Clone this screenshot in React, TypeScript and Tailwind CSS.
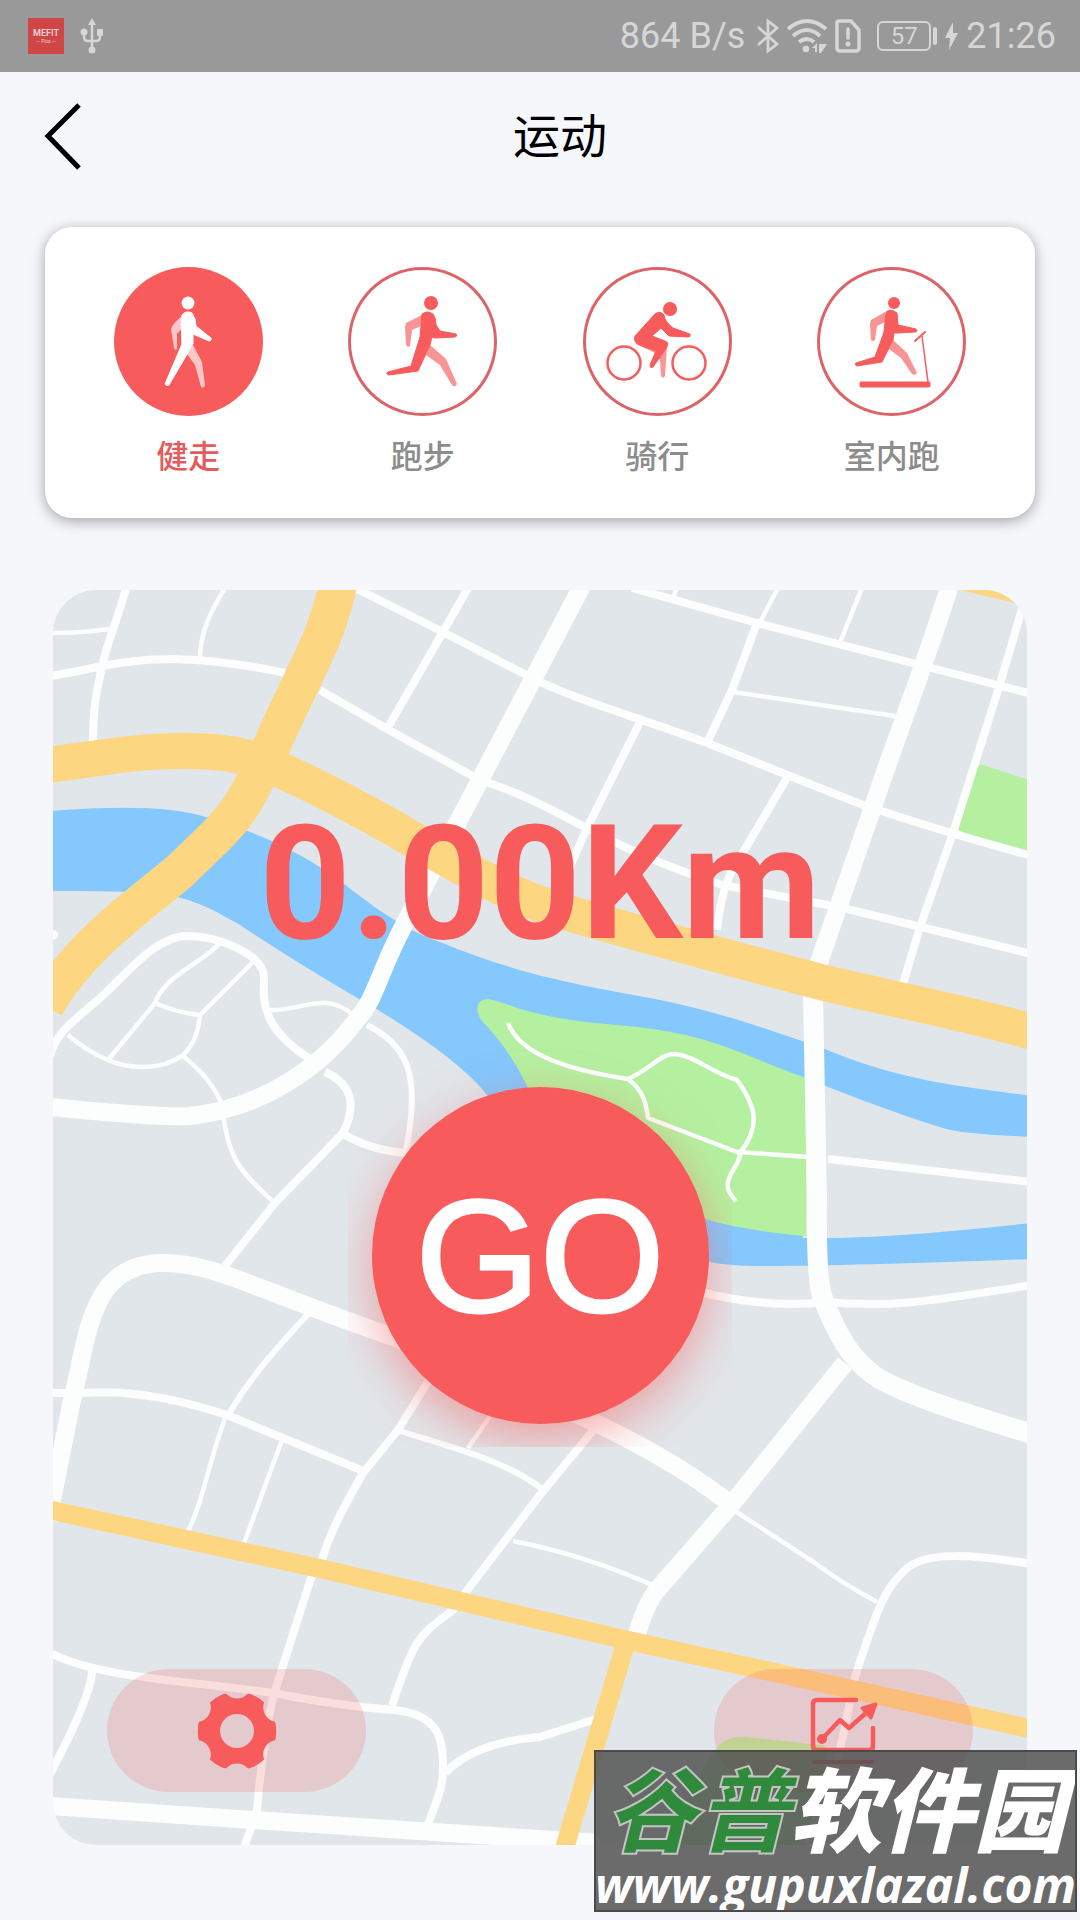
import React, { useState } from 'react';

type IconProps = { className?: string };

const WalkIcon = ({ className }: IconProps) => (
  <svg viewBox="0 0 149 149" className={className} fill="currentColor" stroke="currentColor" strokeLinejoin="round">
    <g opacity="0.65" stroke="none">
      <path d="M67 50C62 54 58 58 57 62L60 81Q61 84 63 82L63 67L68 61Z" />
      <path d="M79 78L88 95L91 118Q90 122 87 120L81 98L73 87Z" />
    </g>
    <circle cx="74" cy="36" r="6.5" stroke="none" />
    <path d="M68 48Q72 43 78 46L81 52L82 59L97 71Q98 74 95 74L79 67L79 77L55 118Q52 120 51 117L68 77L67 54Z" />
  </svg>
);

const RunIcon = ({ className }: IconProps) => (
  <svg viewBox="0 0 149 149" className={className} fill="currentColor" stroke="currentColor" strokeLinejoin="round">
    <g opacity="0.65" stroke="none">
      <path d="M74 48L58 56L57 60L58 78Q60 81 62 79L64 63L73 59Z" />
      <path d="M82 78L98 92L109 117Q107 121 104 118L92 98L78 88Z" />
    </g>
    <circle cx="83" cy="36" r="7" stroke="none" />
    <path d="M74 47Q79 43 85 47Q88 51 88 58L92 64L108 67Q110 69 107 70L87 71L84 70L82 78L70 104L41 108Q37 107 40 105L63 99L72 70Z" />
  </svg>
);

const BikeIcon = ({ className }: IconProps) => (
  <svg viewBox="0 0 149 149" className={className} fill="currentColor" stroke="currentColor" strokeLinejoin="round">
    <path opacity="0.65" stroke="none" d="M58 79L72 86L77 93L78 109Q80 112 82 109L84 80L70 74Z" />
    <g fill="none" strokeWidth="2.5">
      <circle cx="41" cy="96" r="16.5" />
      <circle cx="106" cy="96" r="16.5" />
    </g>
    <circle cx="87" cy="42" r="7" stroke="none" />
    <path d="M72 47Q77 43 81 48Q82 55 90 61L107 67Q108 70 105 70L86 69L78 61L69 69L82 74Q86 75 84 80L70 100Q67 102 67 98L73 84L56 78Q50 75 52 69Z" />
  </svg>
);

const TreadmillIcon = ({ className }: IconProps) => (
  <svg viewBox="0 0 149 149" className={className} fill="currentColor" stroke="currentColor" strokeLinejoin="round">
    <g opacity="0.65" stroke="none">
      <path d="M68 45L54 53L53 57L54 73Q56 75 58 73L60 59L68 55Z" />
      <path d="M76 73L90 86L100 106Q98 109 95 107L84 91L72 82Z" />
    </g>
    <circle cx="77" cy="36" r="6" stroke="none" />
    <path d="M69 45Q74 41 80 46L81 58L99 62Q101 65 98 65L81 66L77 66L76 73L65 95L40 99Q37 98 39 96L58 90L67 65Z" />
    <rect x="43" y="115" width="70" height="5" rx="1" />
    <path fill="none" strokeWidth="1.5" d="M105 69L111 115" />
    <path fill="none" strokeWidth="2" strokeLinecap="round" d="M98 74L108 65" />
  </svg>
);

const GearIcon = ({ className }: IconProps) => (
  <svg viewBox="-40 -40 80 80" className={className}>
    <mask id="gear-notches">
      <circle r="39.5" fill="#fff" />
      <circle r="17" fill="#000" />
      {[0, 60, 120, 180, 240, 300].map((angle) => (
        <circle key={angle} cy="-47" r="14.5" fill="#000" transform={`rotate(${angle})`} />
      ))}
    </mask>
    <circle r="39.5" fill="currentColor" mask="url(#gear-notches)" />
  </svg>
);

const ChartIcon = ({ className }: IconProps) => (
  <svg viewBox="0 0 68 68" className={className} fill="none" stroke="currentColor" strokeWidth="4.5" strokeLinecap="round" strokeLinejoin="round">
    <path d="M46 3H7Q3 3 3 7V49Q3 53 7 53H59Q63 53 63 49V31" />
    <path d="M4 65H62" strokeWidth="4" />
    <path d="M12 42L30 23L39 31L56 16" />
    <circle cx="12" cy="42" r="5" fill="currentColor" stroke="none" />
    <path d="M52 11L66 7L61 21Z" fill="currentColor" strokeWidth="3" />
  </svg>
);

const UsbIcon = () => (
  <svg viewBox="0 0 24 36" className="h-9 w-6" fill="currentColor">
    <path d="M12 0L16 7H8Z" />
    <circle cx="4" cy="14" r="3.5" />
    <rect x="17" y="11" width="6" height="7" rx="1" />
    <circle cx="12" cy="32" r="3.5" />
    <path d="M12 5V32M4 15V19Q4 23 8 23H16Q20 23 20 19V16" fill="none" stroke="currentColor" strokeWidth="2.5" />
  </svg>
);

const StatusBar = () => (
  <div className="flex h-[72px] items-center justify-between bg-[#999999] pl-7 pr-6 font-[Roboto,sans-serif] text-[#d6d6d6]">
    <div className="flex items-center gap-4">
      <div className="flex size-9 flex-col items-center justify-center bg-[#d04545] text-[#f1d0d0]">
        <span className="text-[9px] leading-[10px] font-bold">MEFIT</span>
        <span className="text-[5px] leading-[6px]">— Plus —</span>
      </div>
      <UsbIcon />
    </div>
    <div className="flex items-center">
      <span className="mr-3 text-4xl leading-10">864 B/s</span>
      <svg viewBox="0 0 22 36" className="mr-2 h-9 w-[22px]" fill="none" stroke="currentColor" strokeWidth="2.8">
        <path d="M1 9L20 26L11 33V3L20 10L1 27" />
      </svg>
      <svg viewBox="0 0 40 34" className="mr-2 h-[34px] w-10" fill="none" stroke="currentColor" strokeWidth="3.8">
        <path d="M1 10Q20 -6 39 10M6 17Q20 5 33 17M12 23Q20 17 27 23" />
        <circle cx="19" cy="30" r="3.3" fill="currentColor" stroke="none" />
        <path d="M25 29L30 24V33H28V29ZM32 25H40L34 34H32Z" fill="currentColor" stroke="none" />
      </svg>
      <svg viewBox="0 0 26 34" className="mr-4 h-[34px] w-[26px]" fill="none" stroke="currentColor" strokeWidth="3.5">
        <path d="M4 2H16L24 11V29Q24 32 21 32H5Q2 32 2 29V4Q2 2 4 2Z" />
        <path d="M13 10V19" strokeLinecap="round" />
        <circle cx="13" cy="25" r="2.5" fill="currentColor" stroke="none" />
      </svg>
      <span className="flex h-[30px] w-[54px] items-center justify-center rounded-md border-2 border-current text-2xl leading-6">
        57
      </span>
      <span className="mr-2 ml-0.5 h-[18px] w-1 rounded-sm bg-current" />
      <svg viewBox="0 0 13 28" className="mr-2 h-7 w-[13px]" fill="currentColor">
        <path d="M8 0L0 16H5L4 28L13 11H8Z" />
      </svg>
      <span className="text-4xl leading-10">21:26</span>
    </div>
  </div>
);

const modes = [
  { label: '健走', Icon: WalkIcon },
  { label: '跑步', Icon: RunIcon },
  { label: '骑行', Icon: BikeIcon },
  { label: '室内跑', Icon: TreadmillIcon },
];

// white streets, grouped by stroke width
const streets = [
  {
    width: 4.5,
    d: [
      'M50 633C75 633 95 631 109 629',
      'M225 588C212 610 201 628 200 657',
      'M677 588L671 602M778 588L760 622M862 588L839 645',
      'M733 692L895 716',
      'M220 943C200 965 165 975 155 1003L108 1060',
      'M253 962L200 1015C198 1035 193 1045 183 1055C160 1072 125 1068 108 1060Q88 1052 68 1035',
      'M155 1003Q178 1013 200 1015',
      'M183 1056Q213 1080 222 1105C227 1155 237 1170 275 1203',
      'M268 1010C300 1012 325 990 353 1015',
      'M508 1023C518 1050 555 1068 628 1079C645 1092 646 1105 648 1118L737 1152L810 1157',
      'M628 1079C655 1066 660 1054 675 1054C695 1056 710 1072 737 1080C755 1105 762 1125 740 1153C740 1170 715 1180 736 1201',
      'M513 1541Q585 1555 657 1587',
      'M735 1511L815 1563Q840 1582 877 1602',
      'M225 1418C205 1475 205 1495 187 1534',
      'M282 1440L243 1546',
      'M491 1415L468 1448',
    ],
  },
  {
    width: 6,
    d: [
      'M367 1025C405 1045 422 1070 406 1150',
      'M310 1312C280 1345 255 1370 228 1415',
      'M400 1431C450 1447 505 1460 542 1489',
    ],
  },
  {
    width: 8,
    d: [
      'M127 585C116 625 108 640 103 663S93 700 93 746',
      'M50 676C90 670 120 659 173 659Q225 660 285 673',
      'M355 588L443 632L530 677C575 700 640 718 707 743L863 805C920 824 980 842 1032 856',
      'M468 588L443 632L387 729',
      'M320 690L387 729L480 780C530 796 560 815 587 828Q650 862 723 885L843 908L1032 954',
      'M632 588L757 623L920 665L1032 694',
      'M757 623L732 690L707 743',
      'M1024 602L1000 684L953 833L920 927L903 984',
      'M640 722L587 828L562 885',
      'M787 778L735 866Q722 885 717 930',
      'M828 1159L1032 1182',
      'M700 1292Q770 1309 825 1302C900 1308 935 1300 1032 1285',
      'M50 1056C56 1032 75 1020 100 998S155 936 187 936S265 955 264 978S260 1030 318 1064',
      'M325 1072C352 1084 357 1105 343 1133L275 1203L225 1266',
      'M345 1135Q375 1152 410 1153',
      'M50 1393H83Q145 1388 227 1415L366 1472',
      'M432 1375L398 1430L363 1473C345 1505 328 1535 321 1564L311 1578L273 1697Q262 1750 257 1810L244 1848',
      'M1032 1564C975 1555 925 1550 905 1570S880 1600 855 1677L820 1848',
      'M595 1428L540 1495L465 1593L453 1610C420 1635 415 1635 392 1706',
      'M50 1653C100 1678 180 1680 273 1693Q340 1706 395 1710C440 1715 443 1740 443 1767S435 1800 426 1832',
      'M92 1670Q92 1695 50 1774',
      'M445 1773Q475 1742 540 1737L596 1719',
    ],
  },
  {
    width: 18,
    d: [
      'M582 586L480 780L403 927C380 970 375 1000 358 1018C320 1070 260 1108 190 1116Q160 1118 50 1107',
      'M949 588C925 665 895 740 873 807L817 968',
      'M48 1520L72 1400C88 1340 88 1265 160 1263C215 1262 250 1288 393 1337C480 1372 570 1410 610 1430S695 1475 734 1507',
      'M845 1363L731 1505L657 1590Q645 1605 636 1638',
      'M50 1806L253 1820L600 1843',
    ],
  },
  {
    width: 20,
    d: ['M813 995L817 1200Q816 1275 822 1296C833 1325 850 1365 887 1383S970 1415 1032 1434'],
  },
];

const CityMap = () => (
  <svg
    viewBox="53 590 974 1255"
    preserveAspectRatio="xMidYMid slice"
    className="absolute inset-0 h-full w-full"
    fill="none"
    aria-hidden="true"
  >
    {/* river */}
    <path
      fill="#84c8fe"
      d="M50 811Q160 802 206 817C270 835 320 865 343 883S400 928 440 942C530 980 610 990 660 1000S760 1026 825 1049C900 1080 950 1085 1032 1096V1137Q960 1134 943 1128Q890 1112 803 1077V1238Q880 1240 1032 1223V1259Q850 1266 753 1266C680 1265 600 1240 487 1095Q460 1060 378 1010Q300 965 240 925C180 890 170 892 50 891Z"
    />
    {/* parks */}
    <g fill="#b5f0a0">
      <path d="M487 999C510 1002 520 1017 617 1025S740 1055 806 1078V1236Q740 1230 705 1219Q570 1180 527 1086Q510 1050 482 1021C474 1010 477 1000 487 999Z" />
      <path d="M975 770Q977 764 983 765L1032 781V852L961 832Q957 829 958 824Z" />
      <path d="M695 1783L715 1750Q725 1736 745 1737L822 1745Q828 1747 827 1752L805 1845H670Z" />
    </g>
    <g stroke="#fcfefe" strokeLinejoin="round">
      {streets.map(({ width, d }) => (
        <path key={width} strokeWidth={width} d={d.join('')} />
      ))}
    </g>
    <circle cx="53" cy="935" r="5" fill="#fcfefe" />
    {/* main roads */}
    <g stroke="#fdd682">
      <path strokeWidth="38" d="M339 580C327 640 305 670 272 745S232 820 180 871C140 905 80 945 45 1006" />
      <path strokeWidth="36" d="M40 766C90 760 130 751 180 751S245 755 282 771S380 820 414 840S500 890 540 904S760 966 813 980S970 1013 1040 1034" />
      <path strokeWidth="19" d="M50 1510L322 1569L626 1640L1032 1729M626 1642L564 1850" />
    </g>
    <path fill="#fdd682" d="M960 590L1015 603L1027 590Z" />
  </svg>
);

const ModePicker = () => {
  const [active, setActive] = useState(0);

  return (
    <nav className="mx-[45px] grid grid-cols-4 rounded-[27px] bg-white px-[26px] pt-10 pb-[41px] shadow-[0_3px_14px_rgba(0,0,0,0.35)]">
      {modes.map(({ label, Icon }, i) => (
        <button
          key={label}
          type="button"
          aria-pressed={active === i}
          onClick={() => setActive(i)}
          className="flex flex-col items-center gap-[21px]"
        >
          <span
            className={
              active === i
                ? 'block size-[149px] rounded-full bg-[#f75b5c] text-white'
                : 'block size-[149px] rounded-full text-[#f75b5c] ring-[3px] ring-[#dd6466] ring-inset'
            }
          >
            <Icon className="size-full" />
          </span>
          <span
            className={
              active === i
                ? 'text-[32px] leading-10 font-medium text-[#e65a5c]'
                : 'text-[32px] leading-10 font-medium text-[#8c8c8c]'
            }
          >
            {label}
          </span>
        </button>
      ))}
    </nav>
  );
};

export default function App() {
  return (
    <div className="relative min-h-screen bg-[#f5f7fb] pb-[75px] font-[Roboto,'Noto_Sans_CJK_SC',sans-serif]">
      <StatusBar />

      <header className="grid grid-cols-[1fr_auto_1fr] items-center pt-[25px] pb-[50px] pl-10">
        <button type="button" aria-label="返回" className="justify-self-start">
          <svg viewBox="0 0 46 80" className="h-20 w-[46px]" fill="none" stroke="#000" strokeWidth="5">
            <path d="M39 8L8 39L39 71" />
          </svg>
        </button>
        <h1 className="text-[47px] leading-[56px] text-black">运动</h1>
        <span className="w-10" />
      </header>

      <ModePicker />

      <main className="relative mx-[53px] mt-[72px] overflow-hidden rounded-[43px] bg-[#e1e6ea]">
        <CityMap />

        <div className="relative flex flex-col items-center pt-[214px] pb-[53px]">
          <p className="text-[160px] leading-[160px] font-bold text-[#f75b5c]">0.00Km</p>

          <div className="mt-[83px] flex h-[400px] w-96 justify-center overflow-hidden pt-10">
            <button
              type="button"
              className="size-[337px] rounded-full bg-[#f75b5c] font-['Liberation_Sans',Arial,sans-serif] text-[160px] leading-[160px] text-white shadow-[0_16px_48px_rgba(247,91,92,0.5)] [-webkit-text-stroke:3px_white]"
            >
              GO
            </button>
          </div>

          <div className="mt-[222px] flex w-full justify-between px-[54px]">
            <button
              type="button"
              aria-label="设置"
              className="flex h-[123px] w-[259px] items-center justify-center rounded-full bg-[#f75b5c]/20 text-[#f75b5c]"
            >
              <GearIcon className="size-20" />
            </button>
            <button
              type="button"
              aria-label="统计"
              className="flex h-[123px] w-[259px] items-center justify-center rounded-full bg-[#f75b5c]/20 text-[#f75b5c]"
            >
              <ChartIcon className="size-[68px]" />
            </button>
          </div>
        </div>
      </main>

      <div className="absolute right-[3px] bottom-2 flex h-[162px] w-[483px] flex-col items-center overflow-hidden border-2 border-[#4a4a4a] bg-[#525252]/85 text-white italic">
        <p className="mt-4 text-[92px] leading-[92px] font-black whitespace-nowrap">
          <span className="text-[#2f8a3c] [-webkit-text-stroke:2px_#c4c4c4]">谷普</span>
          软件园
        </p>
        <a
          href="http://www.gupuxlazal.com"
          className="font-['Open_Sans','Noto_Sans',sans-serif] text-[48px] leading-[50px] font-bold whitespace-nowrap"
        >
          www.gupuxlazal.com
        </a>
      </div>
    </div>
  );
}
